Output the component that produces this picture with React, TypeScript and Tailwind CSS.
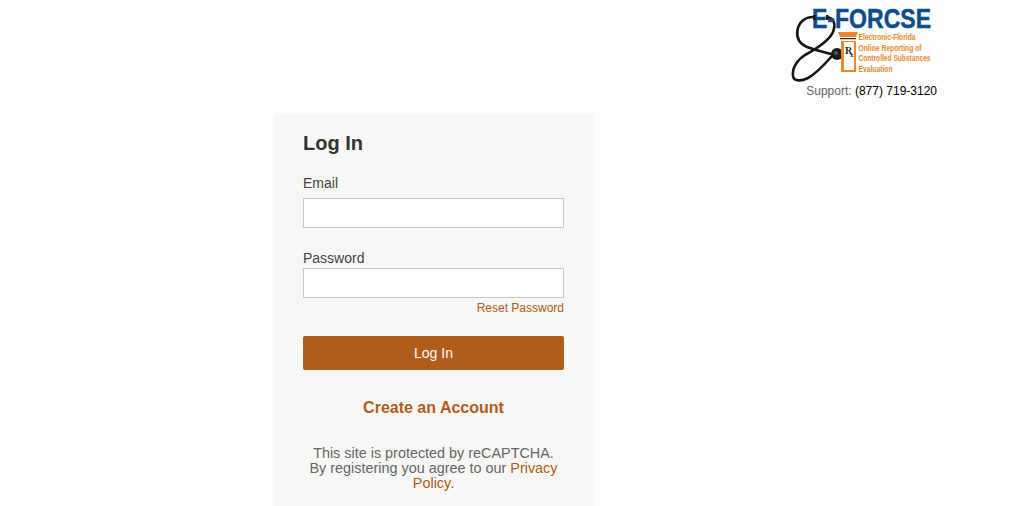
const FONT = "font-['Liberation_Sans',Arial,sans-serif]";

function Logo() {
  return (
    <svg width="146" height="80" viewBox="0 0 146 80" className="block overflow-visible">
      {/* stethoscope */}
      <g fill="none" stroke="#151515" strokeLinecap="round" strokeLinejoin="round" strokeWidth="2.6">
        <path d="M25 15 C17 15 11 20 9.5 28 C8 37 12 42 19 45 C27 48 35 50 43 52" />
        <path d="M39 15 C46 16 48 22 45 30 C41 39 28 47 17 53 C9 58 4 66 5 74 C6 80 14 79 20 76 C29 71 37 62 44 54" />
      </g>
      {/* wordmark */}
      <text x="24" y="26" fontFamily="Liberation Sans, sans-serif" fontWeight="700" fontSize="28" fill="#0f4c8a" stroke="#0f4c8a" strokeWidth="0.5" textLength="119" lengthAdjust="spacingAndGlyphs">
        E-FORCSE
      </text>
      <rect x="25" y="13" width="2.5" height="5" fill="#1a1a1a" />
      <rect x="38" y="13" width="2.5" height="5" fill="#1a1a1a" />
      <circle cx="49" cy="52" r="6" fill="#1a1a1a" />
      <circle cx="48" cy="51" r="2" fill="#555" />
      {/* pill bottle */}
      <path d="M50 30 H70 L68 35 H52 Z" fill="#e8872b" />
      <rect x="52" y="36" width="16" height="1.2" fill="#222" />
      <rect x="53" y="39" width="15" height="31" fill="#e8872b" />
      <rect x="56" y="40" width="10" height="28" fill="#fff" />
      <text x="57" y="52" fontFamily="Liberation Serif, serif" fontWeight="700" fontSize="10" fill="#222">R</text>
      <text x="62" y="55" fontFamily="Liberation Serif, serif" fontWeight="700" fontSize="7" fill="#222">x</text>
      <g fontFamily="Liberation Sans, sans-serif" fontWeight="700" fontSize="8.5" fill="#e8892f">
        <text x="70.5" y="38" textLength="57" lengthAdjust="spacingAndGlyphs">Electronic-Florida</text>
        <text x="70.5" y="48.5" textLength="63" lengthAdjust="spacingAndGlyphs">Online Reporting of</text>
        <text x="70.5" y="59" textLength="72" lengthAdjust="spacingAndGlyphs">Controlled Substances</text>
        <text x="70.5" y="70" textLength="34" lengthAdjust="spacingAndGlyphs">Evaluation</text>
      </g>
    </svg>
  );
}

export default function App() {
  return (
    <div className={`h-[506px] overflow-hidden bg-[#fdfdfd] ${FONT}`}>
      <div className="flex justify-end pr-[78px]">
        <div className="flex flex-col items-end">
          <div className="mr-[3px] mt-[2px]"><Logo /></div>
          <div className="mt-[1px] text-[12px] leading-[16px] text-[#666]">
            Support: <span className="text-black">(877) 719-3120</span>
          </div>
        </div>
      </div>

      <div className="ml-[273px] mt-[14px] w-[321px] h-[400px] bg-[#f7f7f6] px-[30px] pt-[19px]">
        <h1 className="text-[20px] leading-[22px] font-bold text-[#333]">Log In</h1>

        <label className="block mt-[19px] text-[14px] leading-[20px] text-[#444]">Email</label>
        <input type="text" className="block mt-[5px] w-[261px] h-[30px] border border-[#c8c8c8] bg-white" />

        <label className="block mt-[20px] text-[14px] leading-[20px] text-[#444]">Password</label>
        <input type="password" className="block w-[261px] h-[30px] border border-[#c8c8c8] bg-white" />
        <div className="mt-[2px] text-right text-[12px] leading-[16px]">
          <a className="text-[#b05d1b]">Reset Password</a>
        </div>

        <button className="block mt-[20px] w-[261px] h-[34px] rounded-[2px] bg-[#b05d1b] text-[14px] text-[#fdfdfd]">Log In</button>

        <div className="mt-[27px] text-center text-[16px] leading-[22px] font-bold text-[#b05d1b]">Create an Account</div>

        <p className="mt-[27px] text-center text-[14.4px] leading-[15px] text-[#666]">
          This site is protected by reCAPTCHA.<br />
          By registering you agree to our <a className="text-[#b05d1b]">Privacy Policy</a>.
        </p>
      </div>
    </div>
  );
}
